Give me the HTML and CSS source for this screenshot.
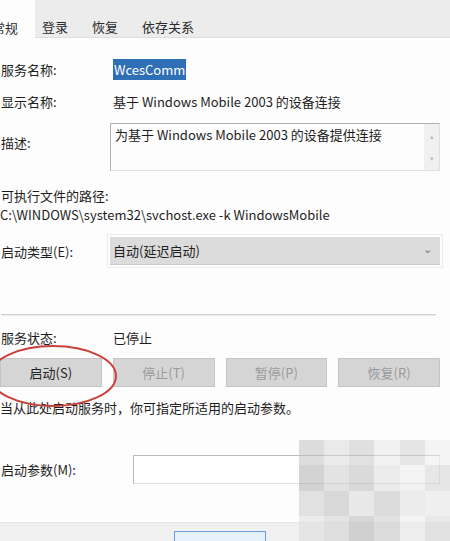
FILE: index.html
```html
<!DOCTYPE html>
<html lang="zh-CN">
<head>
    <meta charset="UTF-8">
    <title>服务属性</title>
    <link rel="stylesheet" href="styles.css">
</head>
<body>
    <div class="dialog">
        <div class="tabs">
            <div class="tab active">常规</div>
            <div class="tab">登录</div>
            <div class="tab">恢复</div>
            <div class="tab">依存关系</div>
        </div>

        <div class="panel">
            <div class="row r-name">
                <span class="label">服务名称:</span>
                <span class="value"><span class="selected">WcesComm</span></span>
            </div>
            <div class="row r-display">
                <span class="label">显示名称:</span>
                <span class="value">基于 Windows Mobile 2003 的设备连接</span>
            </div>
            <div class="row r-desc">
                <span class="label">描述:</span>
                <div class="textarea">
                    <span>为基于 Windows Mobile 2003 的设备提供连接</span>
                    <div class="scroll"><span>▴</span><span>▾</span></div>
                </div>
            </div>

            <div class="path-label">可执行文件的路径:</div>
            <div class="path">C:\WINDOWS\system32\svchost.exe -k WindowsMobile</div>

            <div class="row r-type">
                <span class="label">启动类型(E):</span>
                <div class="select">
                    <span>自动(延迟启动)</span>
                    <span class="caret">⌄</span>
                </div>
            </div>

            <div class="sep"></div>

            <div class="row r-status">
                <span class="label">服务状态:</span>
                <span class="value">已停止</span>
            </div>

            <div class="buttons">
                <div class="btn on">启动(S)</div>
                <div class="btn">停止(T)</div>
                <div class="btn">暂停(P)</div>
                <div class="btn">恢复(R)</div>
            </div>

            <div class="hint">当从此处启动服务时，你可指定所适用的启动参数。</div>

            <div class="row r-param">
                <span class="label">启动参数(M):</span>
                <div class="input"></div>
            </div>
        </div>

        <div class="footer">
            <div class="ok"></div>
        </div>

        <svg class="circle" width="140" height="70" viewBox="0 0 140 70">
            <ellipse cx="75" cy="35" rx="63" ry="30" fill="none" stroke="#c8413a" stroke-width="2"/>
        </svg>

        <div class="mosaic">
            <i style="background:#bdbdbd"></i><i style="background:#d8d8d8"></i><i style="background:#c4c4c4"></i><i style="background:#e6e6e6"></i><i style="background:#cfcfcf"></i><i style="background:#ededed"></i>
            <i style="background:#a9a9a9"></i><i style="background:#c9c9c9"></i><i style="background:#b7b7b7"></i><i style="background:#dadada"></i><i style="background:#e9e9e9"></i><i style="background:#d0d0d0"></i>
            <i style="background:#c6c6c6"></i><i style="background:#b5b5b5"></i><i style="background:#d4d4d4"></i><i style="background:#bcbcbc"></i><i style="background:#dcdcdc"></i><i style="background:#e2e2e2"></i>
            <i style="background:#dcdcdc"></i><i style="background:#cdcdcd"></i><i style="background:#b2b2b2"></i><i style="background:#c8c8c8"></i><i style="background:#ececec"></i><i style="background:#d6d6d6"></i>
        </div>
    </div>
</body>
</html>
```

FILE: styles.css
```css
body {
    margin: 0;
    background: #fdfdfd;
    font-family: "Noto Sans CJK SC", "Noto Sans", sans-serif;
    font-size: 13px;
    color: #1e1e1e;
}

.dialog {
    position: relative;
    width: 450px;
    height: 541px;
    overflow: hidden;
}

.tabs {
    display: flex;
    height: 37px;
    background: #ececec;
    border-bottom: 1px solid #dedede;
}

.tab {
    display: flex;
    align-items: center;
    padding-top: 16px;
    margin-left: 24px;
    color: #2b2b2b;
}

.tab.active {
    background: #fdfdfd;
    margin: 0 0 -1px -8px;
    padding: 16px 17px 0 0;
}

.tab.active + .tab {
    margin-left: 7px;
}

.panel {
    padding: 0 10px 0 1px;
}

.row {
    display: flex;
    align-items: center;
}

.label {
    width: 112px;
    flex-shrink: 0;
}

.r-name {
    margin-top: 21px;
    height: 20px;
}

.selected {
    background: #2f6fb5;
    color: #fff;
    padding: 1px 1px;
}

.r-display {
    margin-top: 12px;
    height: 20px;
}

.r-desc {
    margin-top: 12px;
    align-items: flex-start;
}

.r-desc .label {
    margin-top: 10px;
    width: 109px;
}

.textarea {
    flex: 1;
    height: 46px;
    border: 1px solid #b0b0b0;
    border-bottom-color: #e0e0e0;
    border-right-color: #e0e0e0;
    display: flex;
    justify-content: space-between;
    padding-left: 4px;
    line-height: 20px;
}

.textarea > span {
    padding-top: 1px;
}

.scroll {
    width: 15px;
    background: #f0f0f0;
    display: flex;
    flex-direction: column;
    justify-content: space-between;
    align-items: center;
    font-size: 7px;
    color: #bbb;
    padding: 2px 0;
}

.path-label {
    margin-top: 15px;
    height: 20px;
    line-height: 20px;
}

.path {
    height: 20px;
    line-height: 18px;
    margin-left: -1px;
}

.r-type {
    margin-top: 11px;
}

.r-type .label {
    width: 109px;
}

.select {
    flex: 1;
    height: 27px;
    background: #dcdcdc;
    border-bottom: 1px solid #c9c9c9;
    outline: 1px solid #ececec;
    outline-offset: 2px;
    display: flex;
    align-items: center;
    justify-content: space-between;
    padding: 0 8px 0 3px;
}

.caret {
    font-size: 11px;
    color: #777;
    margin-top: -6px;
}

.sep {
    margin: 49px 4px 0 0;
    height: 1px;
    background: #cfcfcf;
    border-bottom: 1px solid #eeeeee;
}

.r-status {
    margin-top: 11px;
    height: 20px;
}

.buttons {
    display: grid;
    grid-template-columns: repeat(4, 1fr);
    gap: 11px;
    margin-top: 11px;
    margin-left: -1px;
}

.btn {
    height: 27px;
    background: #d5d5d5;
    border: 1px solid #c5c5c5;
    display: flex;
    align-items: center;
    justify-content: center;
    color: #9a9a9a;
}

.btn.on {
    color: #222;
}

.hint {
    margin-top: 11px;
    margin-left: -1px;
    height: 20px;
    line-height: 20px;
}

.r-param {
    margin-top: 37px;
}

.r-param .label {
    width: 132px;
}

.input {
    flex: 1;
    height: 27px;
    border: 1px solid #bdbdbd;
    border-right-color: #e2e2e2;
    border-bottom-color: #dedede;
    background: #fff;
}

.footer {
    position: absolute;
    left: 0;
    right: 0;
    top: 522px;
    bottom: 0;
    background: #f0f0f0;
    border-top: 1px solid #e6e6e6;
}

.ok {
    position: absolute;
    left: 174px;
    top: 8px;
    width: 90px;
    height: 30px;
    border: 1px solid #6a9fd6;
    background: #e5f1fb;
}

.circle {
    position: absolute;
    left: -22px;
    top: 341px;
}

.mosaic {
    position: absolute;
    left: 299px;
    top: 440px;
    width: 151px;
    height: 101px;
    display: grid;
    grid-template-columns: repeat(6, 1fr);
    grid-template-rows: repeat(4, 1fr);
    opacity: 0.5;
}
```
